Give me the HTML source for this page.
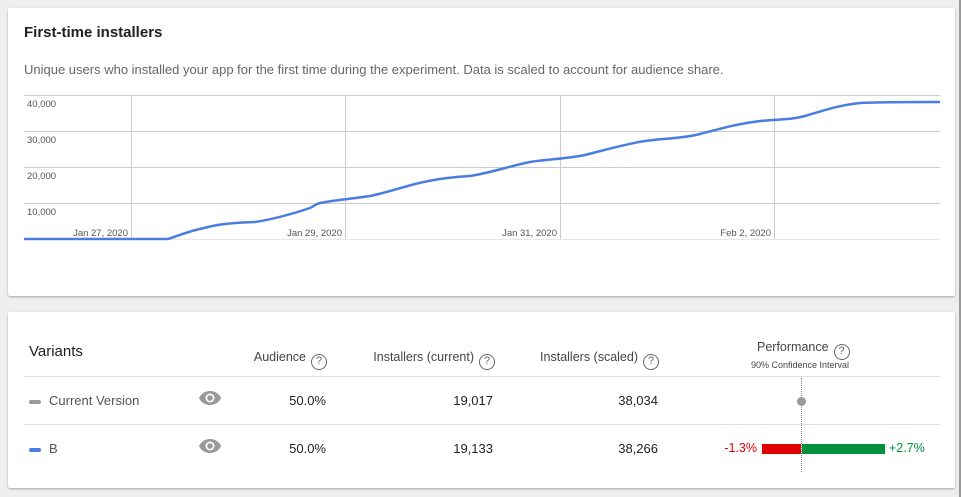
<!DOCTYPE html>
<html><head><meta charset="utf-8"><style>
*{margin:0;padding:0;box-sizing:border-box}
body{width:961px;height:497px;background:#eeeeee;font-family:"Liberation Sans",Arial,sans-serif;position:relative;overflow:hidden}
.card{position:absolute;background:#fff;border-radius:2px;box-shadow:0 1px 2px rgba(0,0,0,.3)}
.a{position:absolute;white-space:nowrap}
.q{display:inline-block;width:16px;height:16px;border:1.3px solid #666;border-radius:50%;font-size:11px;line-height:13px;text-align:center;color:#666;vertical-align:-3px;margin-left:5px}
.h{font-size:12.5px;color:#444}
.v{font-size:13px;color:#222}
</style></head><body>
<div style="position:absolute;right:0;top:0;width:2px;height:497px;background:#999"></div>
<div class="card" style="left:8px;top:8px;width:947px;height:288px"></div>
<div class="card" style="left:8px;top:312px;width:947px;height:176px"></div>
<div class="a" style="left:24px;top:24px;font-size:15px;font-weight:bold;color:#202124">First-time installers</div>
<div class="a" style="left:24px;top:62px;font-size:13px;color:#666">Unique users who installed your app for the first time during the experiment. Data is scaled to account for audience share.</div>
<svg class="a" style="left:0;top:0" width="961" height="300">
<g stroke="#cccccc" stroke-width="1">
<line x1="24" y1="95.5" x2="940" y2="95.5"/><line x1="24" y1="131.5" x2="940" y2="131.5"/><line x1="24" y1="167.5" x2="940" y2="167.5"/><line x1="24" y1="203.5" x2="940" y2="203.5"/><line x1="24" y1="239.5" x2="940" y2="239.5" stroke="#e6e6e6"/>
<line x1="131.5" y1="95" x2="131.5" y2="239"/><line x1="345.5" y1="95" x2="345.5" y2="239"/><line x1="560.5" y1="95" x2="560.5" y2="239"/><line x1="774.5" y1="95" x2="774.5" y2="239"/>
</g>
<g font-family="Liberation Sans,Arial,sans-serif" font-size="9.5" fill="#555">
<text x="27" y="107">40,000</text><text x="27" y="143">30,000</text><text x="27" y="179">20,000</text><text x="27" y="215">10,000</text>
<text x="128" y="236" text-anchor="end">Jan 27, 2020</text><text x="342" y="236" text-anchor="end">Jan 29, 2020</text><text x="557" y="236" text-anchor="end">Jan 31, 2020</text><text x="771" y="236" text-anchor="end">Feb 2, 2020</text>
</g>
<path d="M24 239 L168 239 C180 235 190 231 200 229 C215 225 225 223 255 222 C275 219 295 213 310 208 C314 206 316 204 320 203 C335 200 350 199 370 196 C385 193 400 188 415 184 C440 178 455 177 470 176 C490 173 510 166 530 162 C550 159 565 159 585 155 C605 150 625 144 645 141 C665 138 680 139 700 134 C720 129 735 124 760 121 C780 119 790 120 805 116 C825 110 840 105 860 103 C875 102 900 102 940 102" fill="none" stroke="#4a7de2" stroke-width="2.5"/>
</svg>
<div class="a" style="left:29px;top:343px;font-size:15px;color:#202124">Variants</div>
<div class="a h" style="right:634px;top:350px">Audience<span class="q">?</span></div>
<div class="a h" style="right:466px;top:350px">Installers (current)<span class="q">?</span></div>
<div class="a h" style="right:302px;top:350px">Installers (scaled)<span class="q">?</span></div>
<div class="a h" style="left:757px;top:340px">Performance<span class="q">?</span></div>
<div class="a" style="left:751px;top:360px;font-size:9px;color:#444">90% Confidence Interval</div>
<div class="a" style="left:24px;top:376px;width:916px;height:1px;background:#ddd"></div>
<div class="a" style="left:24px;top:424px;width:916px;height:1px;background:#ddd"></div>
<div class="a" style="left:29px;top:400px;width:12px;height:4px;border-radius:2px;background:#999"></div>
<div class="a" style="left:29px;top:448px;width:12px;height:4px;border-radius:2px;background:#4a7de2"></div>
<div class="a" style="left:49px;top:393px;font-size:13px;color:#555">Current Version</div>
<div class="a" style="left:49px;top:441px;font-size:13px;color:#555">B</div>
<svg class="a" style="left:198px;top:390px" width="24" height="16" viewBox="0 0 24 16"><path d="M12 1C6.5 1 2.5 4.5 1 8c1.5 3.5 5.5 7 11 7s9.5-3.5 11-7C21.5 4.5 17.5 1 12 1z" fill="#999"/><circle cx="12" cy="8" r="4.5" fill="#fff"/><circle cx="12" cy="8" r="2.8" fill="#999"/></svg>
<svg class="a" style="left:198px;top:438px" width="24" height="16" viewBox="0 0 24 16"><path d="M12 1C6.5 1 2.5 4.5 1 8c1.5 3.5 5.5 7 11 7s9.5-3.5 11-7C21.5 4.5 17.5 1 12 1z" fill="#999"/><circle cx="12" cy="8" r="4.5" fill="#fff"/><circle cx="12" cy="8" r="2.8" fill="#999"/></svg>
<div class="a v" style="right:635px;top:393px">50.0%</div>
<div class="a v" style="right:635px;top:441px">50.0%</div>
<div class="a v" style="right:468px;top:393px">19,017</div>
<div class="a v" style="right:468px;top:441px">19,133</div>
<div class="a v" style="right:303px;top:393px">38,034</div>
<div class="a v" style="right:303px;top:441px">38,266</div>
<div class="a" style="left:801px;top:378px;height:94px;border-left:1px dotted #888"></div>
<div class="a" style="left:797px;top:397px;width:9px;height:9px;border-radius:50%;background:#999"></div>
<div class="a" style="left:762px;top:444px;width:39px;height:10px;background:#e00000"></div>
<div class="a" style="left:802px;top:444px;width:83px;height:10px;background:#02913c"></div>
<div class="a" style="right:204px;top:441px;font-size:12.5px;color:#e00000">-1.3%</div>
<div class="a" style="left:889px;top:441px;font-size:12.5px;color:#02913c">+2.7%</div>
</body></html>
